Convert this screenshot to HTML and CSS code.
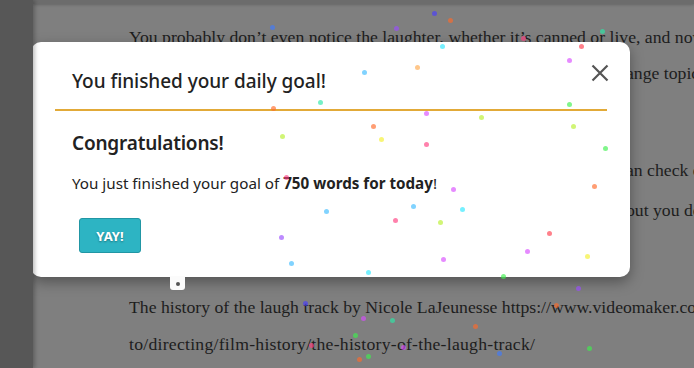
FILE: index.html
```html
<!DOCTYPE html>
<html>
<head>
<meta charset="utf-8">
<link rel="stylesheet" href="styles.css">
</head>
<body>
<div class="app">
  <aside class="sidebar"></aside>
  <main class="doc">
    <div class="topbar"></div>
    <article class="text">
      <div class="line l1">You probably don’t even notice the laughter, whether it’s canned or live, and now that you</div>
      <div class="line l2"><span class="under">know it’s there, you might start hearing it everywhere. Let’s ch</span><span>ange topics for a moment.</span></div>
      <div class="line l3"><span class="under">If you want to learn more about the practice of sweetening, you c</span><span>an check out the</span></div>
      <div class="line l4"><span class="under">article below. It covers quite a few details about the process, b</span><span>out you don’t need</span></div>
      <div class="line l5">The history of the laugh track by Nicole LaJeunesse https://www.videomaker.com/how-</div>
      <div class="line l6">to/directing/film-history/the-history-of-the-laugh-track/</div>
    </article>
  </main>
</div>

<div class="overlay">
  <div class="modal">
    <div class="modal-header">
      <h2 class="modal-title">You finished your daily goal!</h2>
      <button class="close" aria-label="Close">
        <svg width="18" height="18" viewBox="0 0 18 18"><path d="M1.5 1.5 L16.5 16.5 M16.5 1.5 L1.5 16.5" stroke="#555" stroke-width="2.2" fill="none"/></svg>
      </button>
    </div>
    <div class="modal-body">
      <h3 class="congrats">Congratulations!</h3>
      <p class="msg">You just finished your goal of <strong>750 words for today</strong>!</p>
      <button class="yay">YAY!</button>
    </div>
  </div>
  <div class="tab"><span class="tab-dot"></span></div>
  <div class="confetti">
    <i class="dot blue" style="left:272px;top:27px"></i>
    <i class="dot purple" style="left:396px;top:28px"></i>
    <i class="dot indigo" style="left:434px;top:13px"></i>
    <i class="dot orange" style="left:450px;top:20px"></i>
    <i class="dot teal" style="left:602px;top:31px"></i>
    <i class="dot pink" style="left:523px;top:38px"></i>
    <i class="dot cyan" style="left:442px;top:46px"></i>
    <i class="dot red" style="left:581px;top:46px"></i>
    <i class="dot magenta" style="left:569px;top:60px"></i>
    <i class="dot lblue" style="left:364px;top:72px"></i>
    <i class="dot lorange" style="left:417px;top:67px"></i>
    <i class="dot teal" style="left:320px;top:102px"></i>
    <i class="dot orange" style="left:273px;top:108px"></i>
    <i class="dot green" style="left:569px;top:104px"></i>
    <i class="dot magenta" style="left:426px;top:113px"></i>
    <i class="dot ygreen" style="left:481px;top:117px"></i>
    <i class="dot orange" style="left:373px;top:126px"></i>
    <i class="dot ygreen" style="left:573px;top:126px"></i>
    <i class="dot ygreen" style="left:282px;top:136px"></i>
    <i class="dot yellow" style="left:381px;top:139px"></i>
    <i class="dot pink" style="left:426px;top:144px"></i>
    <i class="dot green" style="left:605px;top:148px"></i>
    <i class="dot pink" style="left:286px;top:177px"></i>
    <i class="dot magenta" style="left:453px;top:189px"></i>
    <i class="dot orange" style="left:594px;top:186px"></i>
    <i class="dot lblue" style="left:326px;top:211px"></i>
    <i class="dot lblue" style="left:413px;top:206px"></i>
    <i class="dot cyan" style="left:462px;top:209px"></i>
    <i class="dot pink" style="left:395px;top:220px"></i>
    <i class="dot ygreen" style="left:440px;top:222px"></i>
    <i class="dot red" style="left:549px;top:233px"></i>
    <i class="dot purple" style="left:281px;top:237px"></i>
    <i class="dot magenta" style="left:527px;top:251px"></i>
    <i class="dot yellow" style="left:587px;top:256px"></i>
    <i class="dot magenta" style="left:443px;top:259px"></i>
    <i class="dot lblue" style="left:291px;top:263px"></i>
    <i class="dot cyan" style="left:368px;top:272px"></i>
    <i class="dot green" style="left:503px;top:276px"></i>
    <i class="dot purple" style="left:578px;top:288px"></i>
    <i class="dot orange" style="left:556px;top:305px"></i>
    <i class="dot indigo" style="left:305px;top:303px"></i>
    <i class="dot magenta" style="left:363px;top:318px"></i>
    <i class="dot teal" style="left:392px;top:320px"></i>
    <i class="dot orange" style="left:475px;top:326px"></i>
    <i class="dot green" style="left:355px;top:335px"></i>
    <i class="dot green" style="left:368px;top:356px"></i>
    <i class="dot orange" style="left:359px;top:359px"></i>
    <i class="dot magenta" style="left:403px;top:347px"></i>
    <i class="dot blue" style="left:499px;top:353px"></i>
    <i class="dot green" style="left:589px;top:348px"></i>
    <i class="dot pink" style="left:311px;top:345px"></i>
  </div>
</div>
</body>
</html>
```

FILE: styles.css
```css
* { box-sizing: border-box; }
html, body { margin: 0; padding: 0; width: 694px; height: 368px; overflow: hidden; }
body { background: #7f7f7f; font-family: "Liberation Serif", serif; }

.app { display: flex; height: 368px; }
.sidebar { width: 33px; flex: none; background: #575757; box-shadow: 2px 0 4px rgba(0,0,0,0.25); position: relative; z-index: 1; }
.doc { flex: 1; display: flex; flex-direction: column; overflow: hidden; }
.topbar { height: 4px; flex: none; background: #6c6c6c; box-shadow: 0 1px 3px rgba(0,0,0,0.2); }

.text { padding: 15px 0 0 96px; color: #1d1d1d; font-size: 17.7px; white-space: nowrap; }
.line { height: 36px; line-height: 36px; }
.under { display: inline-block; width: 497px; overflow: hidden; vertical-align: top; }
.l2 { margin-top: 0; }
.l3 { margin-top: 61px; }
.l4 { margin-top: 4px; }
.l5 { margin-top: 61px; }
.l6 { margin-top: 1px; letter-spacing: 0.25px; }

.overlay { position: absolute; inset: 0; }
.modal {
  position: absolute; left: 31px; top: 42px; width: 599px; height: 235px;
  background: #fff; border-radius: 10px;
  box-shadow: 0 5px 14px rgba(0,0,0,0.35);
  padding: 0 23px 0 24px;
  font-family: "Noto Sans", sans-serif; color: #222;
}
.modal-header {
  display: flex; align-items: center; justify-content: space-between;
  height: 69px; border-bottom: 2.5px solid #e2aa38;
  padding: 0 0 0 17px;
}
.modal-title { margin: 10px 0 0 0; font-size: 19px; font-weight: 500; letter-spacing: -0.05px; }
.close { background: none; border: 0; padding: 0; width: 18px; height: 18px; display: flex; align-self: flex-start; margin: 22px -2px 0 0; }

.modal-body { padding: 20px 17px 0; }
.congrats { margin: 0; font-size: 19px; font-weight: 600; line-height: 24px; letter-spacing: -0.2px; }
.msg { margin: 18px 0 0; font-size: 15.2px; line-height: 20px; }
.msg strong { font-weight: 700; }
.yay {
  margin: 25px 0 0 7px; width: 62px; height: 35px;
  background: #2db4c3; border: 1px solid #2196a4; border-radius: 3px;
  color: #fff; font-family: "Noto Sans", sans-serif; font-weight: 700; font-size: 13px;
  text-shadow: 0 1px 2px rgba(0,0,0,0.35); padding: 0;
}

.tab {
  position: absolute; left: 170px; top: 276px; width: 15px; height: 14px;
  background: #fbfbfb; border-radius: 0 0 3px 3px;
  display: flex; align-items: center; justify-content: center;
}
.tab-dot { width: 4px; height: 4px; border-radius: 50%; background: #555; margin-top: 2px; }

.confetti { position: absolute; inset: 0; pointer-events: none; }
.dot { position: absolute; width: 5px; height: 5px; margin: -2.5px 0 0 -2.5px; border-radius: 50%; opacity: 0.65; }
.blue { background: #3f7bff; }
.indigo { background: #4a3dff; }
.purple { background: #9a4dff; }
.orange { background: #ff6a2a; }
.lorange { background: #ffa94d; }
.teal { background: #2de8a8; }
.pink { background: #ff3d7f; }
.red { background: #ff3d4d; }
.magenta { background: #d84dff; }
.cyan { background: #2de8ff; }
.lblue { background: #3dbcff; }
.ygreen { background: #b8f02d; }
.yellow { background: #f5f02d; }
.green { background: #3df04d; }
```
